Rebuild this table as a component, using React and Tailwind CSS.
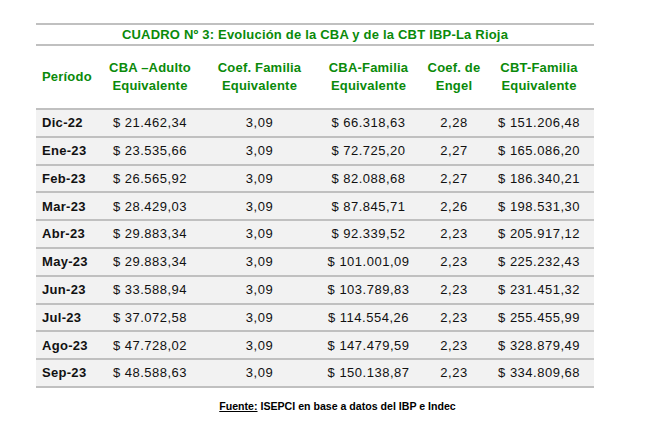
import React from "react";

const rows = [
  ["Dic-22", "$ 21.462,34", "3,09", "$ 66.318,63", "2,28", "$ 151.206,48"],
  ["Ene-23", "$ 23.535,66", "3,09", "$ 72.725,20", "2,27", "$ 165.086,20"],
  ["Feb-23", "$ 26.565,92", "3,09", "$ 82.088,68", "2,27", "$ 186.340,21"],
  ["Mar-23", "$ 28.429,03", "3,09", "$ 87.845,71", "2,26", "$ 198.531,30"],
  ["Abr-23", "$ 29.883,34", "3,09", "$ 92.339,52", "2,23", "$ 205.917,12"],
  ["May-23", "$ 29.883,34", "3,09", "$ 101.001,09", "2,23", "$ 225.232,43"],
  ["Jun-23", "$ 33.588,94", "3,09", "$ 103.789,83", "2,23", "$ 231.451,32"],
  ["Jul-23", "$ 37.072,58", "3,09", "$ 114.554,26", "2,23", "$ 255.455,99"],
  ["Ago-23", "$ 47.728,02", "3,09", "$ 147.479,59", "2,23", "$ 328.879,49"],
  ["Sep-23", "$ 48.588,63", "3,09", "$ 150.138,87", "2,23", "$ 334.809,68"],
];

const cols = "grid grid-cols-[68px_92px_127px_91px_80px_100px]";

export default function App() {
  return (
    <div
      className="w-[645px] h-[425px] bg-white overflow-hidden"
      style={{ fontFamily: '"Liberation Sans", Arial, sans-serif' }}
    >
      <div className="ml-[36px] mt-[23px] w-[558px] border-t-2 border-[#c0c0c0]">
        <div className="h-[21px] flex items-center justify-center border-b-2 border-[#c0c0c0] text-[13px] font-bold text-[#0a8a0a] tracking-[0.2px]">
          CUADRO Nº 3: Evolución de la CBA y de la CBT IBP-La Rioja
        </div>
        <div className={`${cols} h-[64px] border-b-2 border-[#c0c0c0] text-[13px] font-bold text-[#0a8a0a] leading-[17.7px] items-center tracking-[0.2px]`}>
          <div className="pl-[6px]">Período</div>
          <div className="text-center">CBA –Adulto<br />Equivalente</div>
          <div className="text-center">Coef. Familia<br />Equivalente</div>
          <div className="text-center">CBA-Familia<br />Equivalente</div>
          <div className="text-center">Coef. de<br />Engel</div>
          <div className="text-center pr-[10px]">CBT-Familia<br />Equivalente</div>
        </div>
        {rows.map((r) => (
          <div
            key={r[0]}
            className={`${cols} h-[27.8px] items-center bg-[#f2f2f2] border-b-2 border-[#c0c0c0] text-[13px] text-[#111] tracking-[0.5px]`}
          >
            <div className="pl-[6px] font-bold tracking-[0.3px]">{r[0]}</div>
            <div className="text-center">{r[1]}</div>
            <div className="text-center">{r[2]}</div>
            <div className="text-center">{r[3]}</div>
            <div className="text-center">{r[4]}</div>
            <div className="text-center pr-[10px]">{r[5]}</div>
          </div>
        ))}
      </div>
      <div className="mt-[11px] flex justify-center">
        <div className="ml-[30px] text-[10.6px] font-bold text-black">
          <span className="underline underline-offset-[1px]">Fuente:</span> ISEPCI en base a datos del IBP e Indec
        </div>
      </div>
    </div>
  );
}
